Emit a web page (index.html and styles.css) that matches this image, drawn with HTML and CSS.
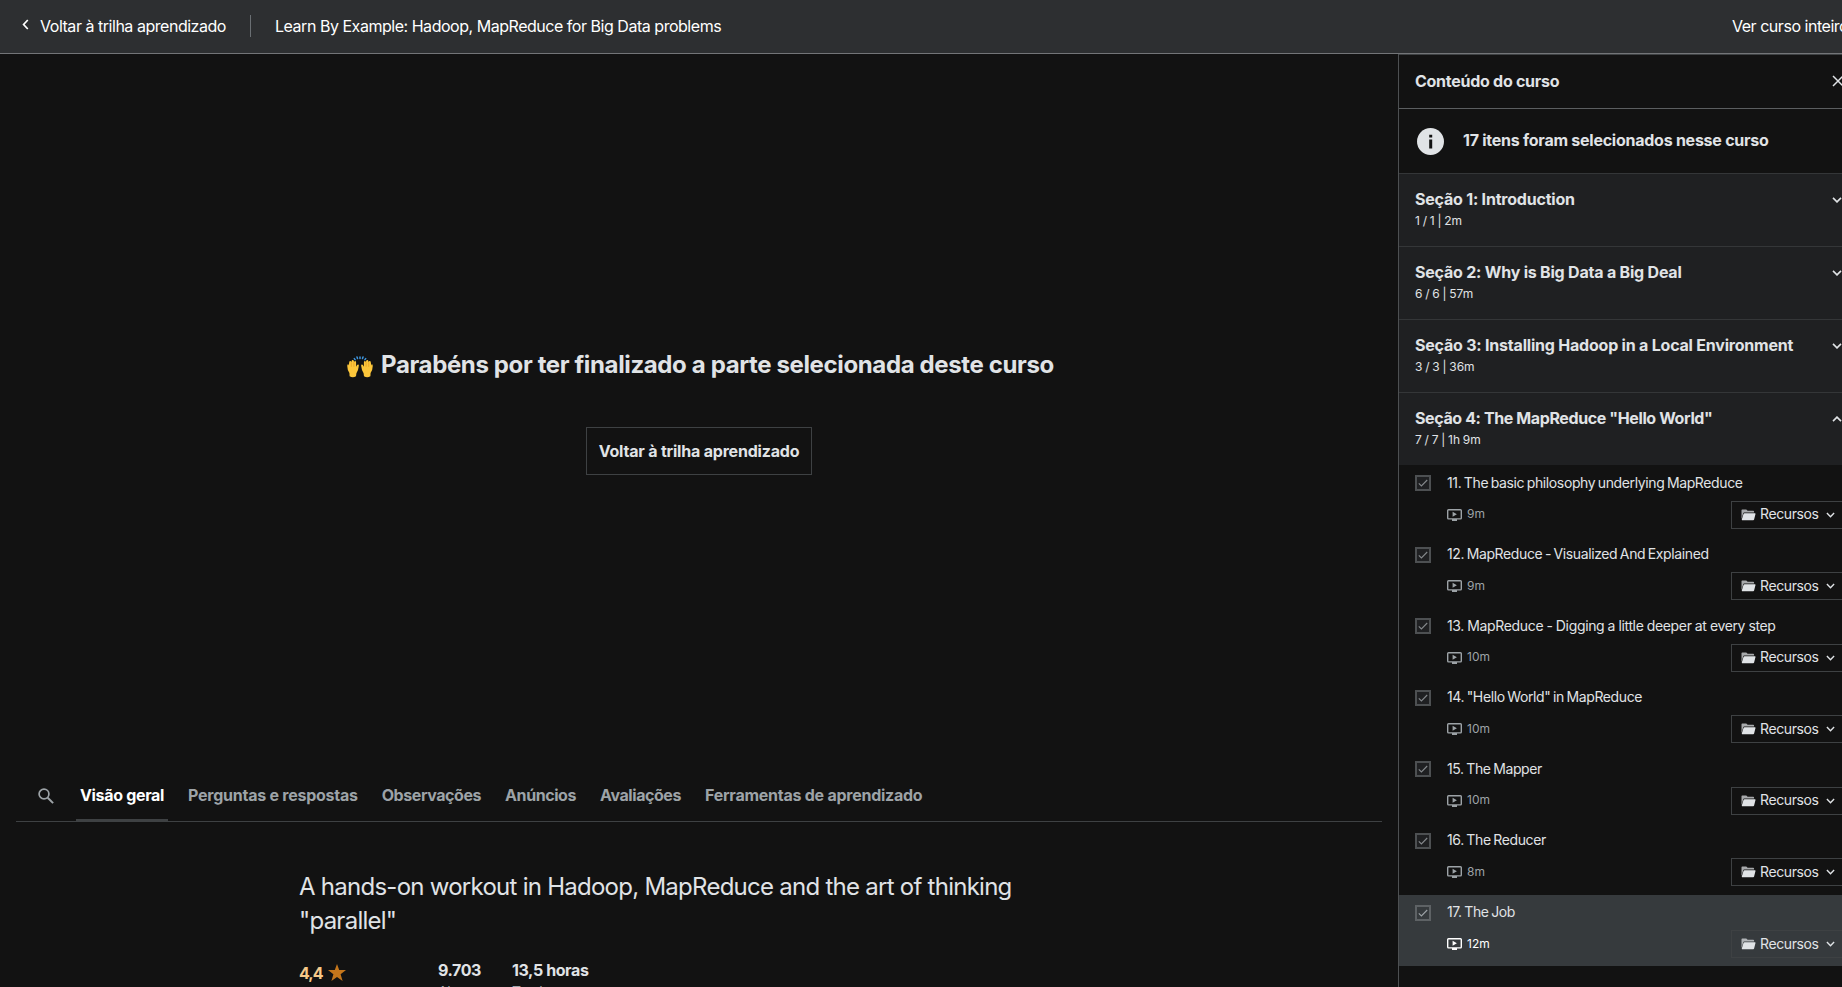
FILE: index.html
```html
<!DOCTYPE html>
<html lang="pt-BR">
<head>
<meta charset="utf-8">
<title>Learn By Example: Hadoop, MapReduce for Big Data problems</title>
<link rel="stylesheet" href="styles.css">
</head>
<body>
<svg class="defs" aria-hidden="true">
  <symbol id="down" viewBox="0 0 10 6"><path d="M1 .9l4 4 4-4" fill="none" stroke="currentColor" stroke-width="1.6"/></symbol>
  <symbol id="check" viewBox="0 0 10 8"><path d="M.8 4.3l2.6 2.6L9.2 1" fill="none" stroke="currentColor" stroke-width="1.1"/></symbol>
  <symbol id="video" viewBox="0 0 15 12"><rect x=".7" y=".7" width="13.6" height="9.2" rx=".8" fill="none" stroke="currentColor" stroke-width="1.4"/><path d="M5 10h5v2H5zM5.6 2.8v5l4.3-2.5z" fill="currentColor"/></symbol>
  <symbol id="folder" viewBox="0 0 15 12"><path d="M.5 10.3V1.2Q.5.4 1.3.4h4l1.3 1.4h5.6q.9 0 .9.9v.8H3.2q-.8 0-1 .8z" fill="currentColor" opacity=".72"/><path d="M3.5 4.2h10.4q.8 0 .6.8l-1.4 5.6q-.2.7-.9.7H1.2q-.6 0-.4-.7l1.7-5.7q.2-.7 1-.7z" fill="currentColor"/></symbol>
</svg>
<header class="topbar">
  <a class="back"><svg class="back-icon" viewBox="0 0 7 11"><path d="M5.8 1L1.6 5.5 5.8 10" fill="none" stroke="currentColor" stroke-width="1.7"/></svg><span>Voltar à trilha aprendizado</span></a>
  <span class="divider"></span>
  <span class="course-title">Learn By Example: Hadoop, MapReduce for Big Data problems</span>
  <a class="full-course">Ver curso inteiro</a>
</header>
<div class="layout">
  <main class="main">
    <section class="stage">
      <h1 class="congrats">
        <svg class="hands" viewBox="0 0 26 22"><g fill="none" stroke="#3f97e0" stroke-width="1.5" stroke-linecap="round"><path d="M13 1v1.6M10 1l.5 1.5M16 1l-.5 1.5M7.3 2.6l.8 1M18.7 2.6l-.8 1"/></g><path d="M2.4 17Q.1 13.5.3 9.6q.1-1.4 1-1.3l.5 1.2L2.2 6.3q.2-1.4 1.1-1.3.8.1.9 1.3L4.6 5q.3-1.2 1.2-1.1.9.1 1 1.2l.3.8q.3-1 1.2-.9.8.2.8 1.4v4.4l1-1.7q.6-1 1.3-.5.6.4.4 1.5-.5 5-2.4 7.2l-.4 3q-3.2 2-6.4 0z" fill="#fcc63a"/><path d="M23.6 17q2.3-3.5 2.1-7.4-.1-1.4-1-1.3l-.5 1.2-.4-3.2q-.2-1.4-1.1-1.3-.8.1-.9 1.3L21.4 5q-.3-1.2-1.2-1.1-.9.1-1 1.2l-.3.8q-.3-1-1.2-.9-.8.2-.8 1.4v4.4l-1-1.7q-.6-1-1.3-.5-.6.4-.4 1.5.5 5 2.4 7.2l.4 3q3.2 2 6.4 0z" fill="#fcc63a"/><path d="M4.3 6.3v4.5M6.9 6v4.8M21.7 6.3v4.5M19.1 6v4.8" stroke="#e39b25" stroke-width=".7"/></svg>
        <span>Parabéns por ter finalizado a parte selecionada deste curso</span>
      </h1>
      <button class="return">Voltar à trilha aprendizado</button>
    </section>
    <nav class="tabs">
      <svg class="search" viewBox="0 0 16 16"><circle cx="6" cy="6" r="4.9" fill="none" stroke="currentColor" stroke-width="1.7"/><path d="M9.7 9.7l5.4 5.4" stroke="currentColor" stroke-width="2"/></svg>
      <a class="tab active">Visão geral</a>
      <a class="tab wide">Perguntas e respostas</a>
      <a class="tab">Observações</a>
      <a class="tab">Anúncios</a>
      <a class="tab">Avaliações</a>
      <a class="tab wide">Ferramentas de aprendizado</a>
    </nav>
    <section class="overview">
      <h2 class="headline">A hands-on workout in Hadoop, MapReduce and the art of thinking<br>"parallel"</h2>
      <div class="stats">
        <div class="stat rating"><span>4,4</span><svg class="star" viewBox="0 0 18 17"><path d="M9 0l2.2 6H18l-5.4 4.2L14.6 17 9 12.9 3.4 17l2-6.8L0 6h6.8z" fill="#c4761c"/></svg></div>
        <div class="stat students"><b>9.703</b><span class="label">Alunos</span></div>
        <div class="stat"><b>13,5 horas</b><span class="label">Total</span></div>
      </div>
    </section>
  </main>
  <aside class="sidebar">
    <div class="side-head"><span>Conteúdo do curso</span><svg class="close" viewBox="0 0 12 12"><path d="M1 1l10 10M11 1L1 11" stroke="currentColor" stroke-width="1.5"/></svg></div>
    <div class="notice"><svg class="info" viewBox="0 0 27 27"><circle cx="13.5" cy="13.5" r="13.5" fill="#e0e3e6"/><path d="M12.2 6.8h3v2.8h-3zM12.2 11.6h3v9h-3z" fill="#121212"/></svg><span>17 itens foram selecionados nesse curso</span></div>
    <div class="section"><div><h3>Seção 1: Introduction</h3><p>1 / 1 | 2m</p></div><svg class="caret"><use href="#down"/></svg></div>
    <div class="section"><div><h3>Seção 2: Why is Big Data a Big Deal</h3><p>6 / 6 | 57m</p></div><svg class="caret"><use href="#down"/></svg></div>
    <div class="section"><div><h3>Seção 3: Installing Hadoop in a Local Environment</h3><p>3 / 3 | 36m</p></div><svg class="caret"><use href="#down"/></svg></div>
    <div class="section open"><div><h3>Seção 4: The MapReduce "Hello World"</h3><p>7 / 7 | 1h 9m</p></div><svg class="caret"><use href="#down"/></svg></div>
    <ul class="lessons">
      <li class="lesson"><span class="box"><svg><use href="#check"/></svg></span><div class="body"><p class="name">11. The basic philosophy underlying MapReduce</p><div class="meta"><svg class="video"><use href="#video"/></svg><span>9m</span><button class="res"><svg class="folder"><use href="#folder"/></svg><span>Recursos</span><svg class="mini"><use href="#down"/></svg></button></div></div></li>
      <li class="lesson"><span class="box"><svg><use href="#check"/></svg></span><div class="body"><p class="name">12. MapReduce - Visualized And Explained</p><div class="meta"><svg class="video"><use href="#video"/></svg><span>9m</span><button class="res"><svg class="folder"><use href="#folder"/></svg><span>Recursos</span><svg class="mini"><use href="#down"/></svg></button></div></div></li>
      <li class="lesson"><span class="box"><svg><use href="#check"/></svg></span><div class="body"><p class="name long">13. MapReduce - Digging a little deeper at every step</p><div class="meta"><svg class="video"><use href="#video"/></svg><span>10m</span><button class="res"><svg class="folder"><use href="#folder"/></svg><span>Recursos</span><svg class="mini"><use href="#down"/></svg></button></div></div></li>
      <li class="lesson"><span class="box"><svg><use href="#check"/></svg></span><div class="body"><p class="name">14. "Hello World" in MapReduce</p><div class="meta"><svg class="video"><use href="#video"/></svg><span>10m</span><button class="res"><svg class="folder"><use href="#folder"/></svg><span>Recursos</span><svg class="mini"><use href="#down"/></svg></button></div></div></li>
      <li class="lesson"><span class="box"><svg><use href="#check"/></svg></span><div class="body"><p class="name">15. The Mapper</p><div class="meta"><svg class="video"><use href="#video"/></svg><span>10m</span><button class="res"><svg class="folder"><use href="#folder"/></svg><span>Recursos</span><svg class="mini"><use href="#down"/></svg></button></div></div></li>
      <li class="lesson"><span class="box"><svg><use href="#check"/></svg></span><div class="body"><p class="name">16. The Reducer</p><div class="meta"><svg class="video"><use href="#video"/></svg><span>8m</span><button class="res"><svg class="folder"><use href="#folder"/></svg><span>Recursos</span><svg class="mini"><use href="#down"/></svg></button></div></div></li>
      <li class="lesson current"><span class="box"><svg><use href="#check"/></svg></span><div class="body"><p class="name">17. The Job</p><div class="meta"><svg class="video"><use href="#video"/></svg><span>12m</span><button class="res"><svg class="folder"><use href="#folder"/></svg><span>Recursos</span><svg class="mini"><use href="#down"/></svg></button></div></div></li>
    </ul>
  </aside>
</div>
</body>
</html>
```
FILE: styles.css
```css
* { box-sizing: border-box; }
html, body { height: 987px; overflow: hidden; }
body { margin: 0; background: #121212; color: #e0e3e6; font-family: Inter, "Liberation Sans", sans-serif; font-size: 16px; line-height: 20px; white-space: nowrap; }
h1, h2, h3, p, ul { margin: 0; padding: 0; }
svg { display: block; flex: none; }
.defs { display: none; }
button { font: inherit; color: inherit; background: none; border: 1px solid #3e4143; border-radius: 0; padding: 0; }

.topbar { display: flex; align-items: center; height: 54px; padding: 0 0 2px 22px; background: #2d2f31; border-bottom: 1px solid #737578; color: #fff; letter-spacing: -0.47px; overflow: hidden; }
.back { display: flex; align-items: center; gap: 11px; width: 228px; }
.back-icon { width: 7px; height: 11px; margin-top: -2px; }
.divider { width: 1px; height: 22px; background: #6a6f73; margin-right: 24px; }
.full-course { margin-left: auto; width: 110px; letter-spacing: -0.47px; }

.layout { display: flex; height: 933px; }
.main { width: 1398px; }
.stage { height: 717px; display: flex; flex-direction: column; align-items: center; padding-top: 294px; }
.congrats { display: flex; align-items: center; gap: 8px; height: 34px; margin-left: 3px; font-size: 24px; line-height: 34px; font-weight: 700; letter-spacing: -0.37px; }
.hands { width: 26px; height: 22px; margin-top: 3px; }
.return { width: 226px; height: 48px; margin-top: 45px; font-weight: 700; letter-spacing: -0.2px; }

.tabs { display: flex; align-items: center; gap: 16px; height: 51px; margin: 0 16px; padding-left: 22px; border-bottom: 1px solid #3e4143; }
.search { width: 16px; height: 16px; margin: -1px 6px 0 0; color: #9da3a7; }
.tab { height: 50px; line-height: 49px; padding: 0 4px; font-weight: 700; color: #9da3a7; letter-spacing: -0.43px; }
.tab.active { color: #fff; border-bottom: 2px solid #3e4143; letter-spacing: -0.33px; }
.tab.wide { letter-spacing: -0.25px; }

.overview { padding: 48px 0 0 299px; }
.headline { font-size: 24px; line-height: 33.6px; font-weight: 400; letter-spacing: -0.74px; }
.stats { display: flex; margin-top: 22px; letter-spacing: -0.4px; }
.stat { display: flex; flex-direction: column; line-height: 22px; }
.stat b { font-weight: 700; }
.label { font-size: 14px; line-height: 20px; margin-top: 1px; color: #9da3a7; }
.rating { flex-direction: row; gap: 6px; width: 139px; height: 24px; align-items: center; font-weight: 700; color: #f6c98a; letter-spacing: -1px; margin-top: 2px; }
.star { width: 18px; height: 17px; margin-top: -2px; }
.students { width: 74px; }

.sidebar { width: 444px; border-left: 1px solid #4d5052; flex: none; overflow: hidden; }
.side-head { display: flex; align-items: center; justify-content: space-between; height: 55px; padding: 0 0 2px 16px; border-top: 1px solid #3e4143; border-bottom: 1px solid #5b5e60; font-weight: 700; letter-spacing: -0.27px; }
.close { width: 12px; height: 12px; margin-right: -2px; }
.notice { display: flex; align-items: center; gap: 19px; height: 64px; padding-left: 18px; font-weight: 700; letter-spacing: -0.25px; }
.notice span { margin-top: -2px; }
.info { width: 27px; height: 27px; }
.section { display: flex; justify-content: space-between; height: 73px; padding: 15px 0 0 16px; background: #1f2022; border-top: 1px solid #343638; }
.section h3 { font-size: 16px; line-height: 21px; font-weight: 700; letter-spacing: -0.21px; }
.section.open h3 { letter-spacing: -0.39px; }
.section p { font-size: 12px; line-height: 17px; margin-top: 2px; word-spacing: -0.6px; }
.caret { width: 10px; height: 6px; margin-top: 8px; color: #e0e3e6; }
.open .caret { transform: scaleY(-1); }
.lessons { list-style: none; }
.lesson { display: flex; height: 71.6px; padding: 8px 0 0 16px; }
.box { width: 16px; height: 16px; border: 2px solid #4d5052; margin-top: 2px; background: #1f2022; display: flex; align-items: center; justify-content: center; }
.box svg { width: 10px; height: 8px; color: #85898c; }
.body { flex: 1; padding-left: 16px; }
.name { font-size: 14px; line-height: 20px; margin-top: -0.5px; letter-spacing: -0.38px; word-spacing: -1px; }
.name.long { letter-spacing: -0.35px; word-spacing: -0.3px; }
.meta { display: flex; align-items: center; height: 28px; margin-top: 8px; font-size: 12px; color: #9da3a7; }
.meta > span { margin-top: -1px; }
.video { width: 15px; height: 12px; margin-right: 5px; }
.res { display: flex; align-items: center; width: 120px; height: 28px; margin-left: auto; margin-right: -9px; padding-left: 9px; font-size: 14px; letter-spacing: -0.4px; color: #e0e3e6; }
.res > span { margin-top: -1px; }
.folder { width: 15px; height: 12px; margin-right: 4px; }
.mini { width: 9px; height: 6px; margin-left: 7px; }
.current { background: #363a3d; }
.current .meta { color: #fff; }
.current .box { background: #363a3d; border-color: #5e6265; }
.current .box svg { color: #9da3a7; }
```
